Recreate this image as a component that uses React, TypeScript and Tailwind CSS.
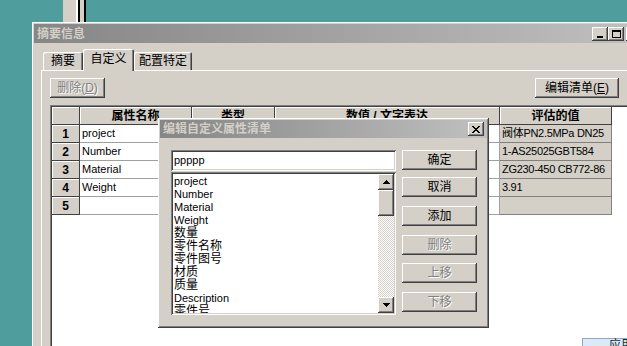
import React from "react";

const rows = [
  { n: 1, name: "project", value: "阀体PN2.5MPa DN25" },
  { n: 2, name: "Number", value: "1-AS25025GBT584" },
  { n: 3, name: "Material", value: "ZG230-450 CB772-86" },
  { n: 4, name: "Weight", value: "3.91" },
  { n: 5, name: "", value: "" },
];

const listItems = [
  "project",
  "Number",
  "Material",
  "Weight",
  "数量",
  "零件名称",
  "零件图号",
  "材质",
  "质量",
  "Description",
  "零件号",
];

const raised =
  "shadow-[inset_-1px_-1px_0_#404040,inset_1px_1px_0_#ffffff,inset_-2px_-2px_0_#808080]";
const frame =
  "shadow-[inset_-1px_-1px_0_#404040,inset_1px_1px_0_#ffffff,inset_-2px_-2px_0_#808080,inset_2px_2px_0_#d4d0c8]";
const sunken =
  "shadow-[inset_1px_1px_0_#808080,inset_-1px_-1px_0_#ffffff,inset_2px_2px_0_#404040,inset_-2px_-2px_0_#d4d0c8]";

function Button({
  children,
  disabled,
  className = "",
}: {
  children: React.ReactNode;
  disabled?: boolean;
  className?: string;
}) {
  return (
    <div
      className={`h-[20px] bg-[#d4d0c8] flex items-center justify-center text-[12px] ${raised} ${
        disabled ? "text-[#808080] [text-shadow:1px_1px_0_#ffffff]" : "text-black"
      } ${className}`}
    >
      {children}
    </div>
  );
}

function TitleButton({ children, className = "" }: { children: React.ReactNode; className?: string }) {
  return (
    <div className={`w-[16px] h-[14px] bg-[#d4d0c8] flex items-center justify-center ${raised} ${className}`}>
      {children}
    </div>
  );
}

function CloseGlyph() {
  return (
    <svg width="8" height="7" viewBox="0 0 8 7" shapeRendering="crispEdges">
      <path d="M0 0h2v1h-2zM6 0h2v1h-2zM1 1h2v1h-2zM5 1h2v1h-2zM2 2h4v1h-4zM3 3h2v1h-2zM2 4h4v1h-4zM1 5h2v1h-2zM5 5h2v1h-2zM0 6h2v1h-2zM6 6h2v1h-2z" fill="#000" />
    </svg>
  );
}

function Arrow({ down }: { down?: boolean }) {
  return (
    <svg width="7" height="4" viewBox="0 0 7 4" shapeRendering="crispEdges">
      {down ? (
        <path d="M0 0h7v1h-7zM1 1h5v1h-5zM2 2h3v1h-3zM3 3h1v1h-1z" fill="#000" />
      ) : (
        <path d="M3 0h1v1h-1zM2 1h3v1h-3zM1 2h5v1h-5zM0 3h7v1h-7z" fill="#000" />
      )}
    </svg>
  );
}

const headCell =
  "bg-[#d4d0c8] border-r border-b border-[#404040] shadow-[inset_1px_1px_0_#ffffff] flex items-center justify-center font-bold text-[12px] overflow-hidden whitespace-nowrap";

export default function App() {
  return (
    <div className="relative w-[627px] h-[346px] overflow-hidden bg-[#509d9e] font-['Liberation_Sans','Noto_Sans_CJK_SC',sans-serif] text-black select-none">
      {/* window behind, peeking out at the top */}
      <div className="absolute left-[63px] top-0 h-[22px] flex">
        <div className="w-[13px] bg-[#d4d0c8]" />
        <div className="w-[2px] bg-white" />
        <div className="w-[2px] bg-black" />
        <div className="w-[4px] bg-[#d4d0c8]" />
        <div className="w-[2px] bg-black" />
      </div>

      {/* main window */}
      <div className={`absolute left-[32px] top-[22px] w-[614px] h-[340px] bg-[#d4d0c8] p-[2px] flex flex-col ${frame}`}>
        <div className="h-[19px] bg-gradient-to-r from-[#868686] to-[#c0c0c0] flex items-center pl-[3px]">
          <span className="text-[12px] font-bold text-[#d4d0c8]">摘要信息</span>
          <div className="ml-auto flex items-center mr-[2px]">
            <TitleButton>
              <div className="w-[6px] h-[2px] bg-black mt-[6px] -ml-[1px]" />
            </TitleButton>
            <TitleButton>
              <div className="w-[9px] h-[8px] border border-black border-t-2" />
            </TitleButton>
            <TitleButton className="ml-[2px]">
              <CloseGlyph />
            </TitleButton>
          </div>
        </div>

        {/* tab control */}
        <div className="ml-[7px] mt-[6px] flex flex-col flex-1">
          <div className="h-[21px] flex items-end pl-[2px] relative z-10">
            <div className="w-[40px] h-[18px] flex items-center justify-center text-[12px] rounded-t-[2px] shadow-[inset_1px_1px_0_#ffffff,inset_-1px_0_0_#404040,inset_-2px_0_0_#808080]">
              摘要
            </div>
            <div className="w-[51px] h-[22px] -mb-[1px] bg-[#d4d0c8] flex items-center justify-center text-[12px] pb-[2px] rounded-t-[2px] shadow-[inset_1px_1px_0_#ffffff,inset_-1px_0_0_#404040,inset_-2px_0_0_#808080]">
              自定义
            </div>
            <div className="w-[58px] h-[18px] flex items-center justify-center text-[12px] rounded-t-[2px] shadow-[inset_1px_1px_0_#ffffff,inset_-1px_0_0_#404040,inset_-2px_0_0_#808080]">
              配置特定
            </div>
          </div>
          <div className="flex-1 border-t border-l border-white pl-[8px] pt-[7px] flex flex-col">
            <div className="w-[569px] flex justify-between">
              <Button disabled className="w-[55px]">
                删除(<span className="underline">D</span>)
              </Button>
              <Button className="w-[84px]">
                编辑清单(<span className="underline">E</span>)
              </Button>
            </div>

            {/* property grid */}
            <div className={`mt-[7px] flex-1 w-[600px] bg-white p-[2px] ${sunken}`}>
              <div className="grid grid-cols-[28px_112px_83px_225px_112px] auto-rows-[18px]">
                <div className={headCell} />
                <div className={headCell}>属性名称</div>
                <div className={headCell}>类型</div>
                <div className={headCell}>数值 / 文字表达</div>
                <div className={headCell}>评估的值</div>
                {rows.map((r) => (
                  <React.Fragment key={r.n}>
                    <div className={headCell}>{r.n}</div>
                    <div className="bg-white border-r border-b border-[#a0a0a0] pl-[2px] flex items-center text-[11px] whitespace-nowrap overflow-hidden">
                      {r.name}
                    </div>
                    <div className="bg-white border-r border-b border-[#a0a0a0]" />
                    <div className="bg-white border-r border-b border-[#a0a0a0]" />
                    <div className="bg-[#d4d0c8] border-r border-b border-[#808080] pl-[2px] flex items-center text-[11px] tracking-[-0.3px] whitespace-nowrap overflow-hidden">
                      {r.value}
                    </div>
                  </React.Fragment>
                ))}
              </div>
            </div>
          </div>
        </div>
      </div>

      {/* edit dialog */}
      <div className={`absolute left-[158px] top-[118px] w-[331px] h-[210px] bg-[#d4d0c8] p-[2px] flex flex-col ${frame}`}>
        <div className="h-[18px] bg-gradient-to-r from-[#868686] to-[#c0c0c0] flex items-center pl-[3px]">
          <span className="text-[12px] font-bold text-[#d4d0c8]">编辑自定义属性清单</span>
          <TitleButton className="ml-auto mr-[3px]">
            <CloseGlyph />
          </TitleButton>
        </div>
        <div className="mt-[12px] pl-[11px] flex gap-[6px]">
          <div className="w-[225px] flex flex-col">
            <div className={`h-[21px] bg-white flex items-center pl-[3px] text-[11px] ${sunken}`}>ppppp</div>
            <div className={`mt-[1px] h-[143px] bg-white p-[2px] flex ${sunken}`}>
              <div className="flex-1 overflow-hidden pl-[1px] pt-[1px] leading-[13px]">
                {listItems.map((it) => (
                  <div
                    key={it}
                    className={`h-[13px] whitespace-nowrap ${/^[\x00-\x7f]+$/.test(it) ? "text-[11px]" : "text-[12px]"}`}
                  >
                    {it}
                  </div>
                ))}
              </div>
              <div className="w-[16px] flex flex-col bg-[image:repeating-conic-gradient(#ffffff_0%_25%,#d4d0c8_0%_50%)] bg-[length:2px_2px]">
                <div className={`h-[16px] bg-[#d4d0c8] flex items-center justify-center ${raised}`}>
                  <Arrow />
                </div>
                <div className={`h-[26px] bg-[#d4d0c8] ${raised}`} />
                <div className={`mt-auto h-[16px] bg-[#d4d0c8] flex items-center justify-center ${raised}`}>
                  <Arrow down />
                </div>
              </div>
            </div>
          </div>
          <div className="w-[75px] flex flex-col">
            <Button>确定</Button>
            <Button className="mt-[7px]">取消</Button>
            <Button className="mt-[9px]">添加</Button>
            <Button disabled className="mt-[9px]">
              删除
            </Button>
            <Button disabled className="mt-[8px]">
              上移
            </Button>
            <Button disabled className="mt-[9px]">
              下移
            </Button>
          </div>
        </div>
      </div>

      {/* another window's button, bottom right */}
      <div className="absolute left-[582px] top-[338px] w-[60px] h-[20px] bg-[#dce9f7] border-t border-l border-[#8aa8cc] pl-[26px] text-[12px] leading-[12px] text-[#1a2a40]">
        应用
      </div>
    </div>
  );
}
